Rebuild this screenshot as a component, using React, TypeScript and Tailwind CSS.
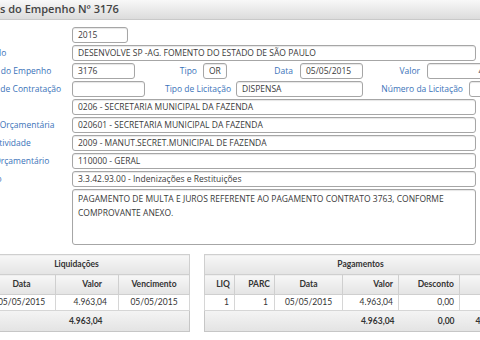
import type { ReactNode } from "react";

type Row = { label: string; lcls: string; value: string };

// full width rows below the "Tipo" block
const fullRows: Row[] = [
  { label: "Órgão", lcls: "-ml-[40px]", value: "0206 - SECRETARIA MUNICIPAL DA FAZENDA" },
  { label: "Unidade Orçamentária", lcls: "-ml-[36px]", value: "020601 - SECRETARIA MUNICIPAL DA FAZENDA" },
  { label: "Projeto/Atividade", lcls: "-ml-[38px]", value: "2009 - MANUT.SECRET.MUNICIPAL DE FAZENDA" },
  { label: "Recurso Orçamentário", lcls: "-ml-[40px]", value: "110000 - GERAL" },
  { label: "Elemento", lcls: "-ml-[36px]", value: "3.3.42.93.00 - Indenizações e Restituições" },
];

function Label({ children, className = "" }: { children: ReactNode; className?: string }) {
  return (
    <div className="w-[72px] shrink-0">
      <span className={`block whitespace-nowrap text-[#3b73b9] ${className}`}>{children}</span>
    </div>
  );
}

function Field({ children, className = "" }: { children?: ReactNode; className?: string }) {
  return (
    <div
      className={`h-[16px] shrink-0 rounded-[3px] border border-[#a6a6a6] bg-white px-[5px] leading-[14px] whitespace-nowrap overflow-hidden shadow-[inset_0_1px_1px_rgba(0,0,0,0.1)] ${className}`}
    >
      {children}
    </div>
  );
}

const th = "border border-[#cfcfcf] font-bold text-[#333] h-[20px] bg-gradient-to-b from-[#f7f7f7] to-[#e4e4e4]";
const td = "border border-[#d6d6d6] h-[16px] bg-white";

export default function App() {
  return (
    <div className="w-[480px] h-[340px] overflow-hidden bg-white font-['Open_Sans',sans-serif] text-[8.5px] text-[#3a3a3a]">
      {/* title bar */}
      <div className="h-[20px] border-b border-[#c9c9c9] bg-gradient-to-b from-[#f8f8f8] to-[#dcdcdc] flex items-center">
        <span className="-ml-[28px] whitespace-nowrap text-[11px] font-semibold text-[#444]">
          Dados do Empenho Nº 3176
        </span>
      </div>

      {/* form */}
      <div className="mt-[7px] flex flex-col gap-[2px]">
        <div className="flex items-center">
          <Label className="-ml-[30px]">Ano</Label>
          <Field className="w-[56px]">2015</Field>
        </div>
        <div className="flex items-center">
          <Label className="-ml-[16px]">Título</Label>
          <Field className="w-[404px]">DESENVOLVE SP -AG. FOMENTO DO ESTADO DE SÃO PAULO</Field>
        </div>
        <div className="flex items-center">
          <Label className="-ml-[11px]">Nº do Empenho</Label>
          <Field className="w-[63px]">3176</Field>
          <div className="w-[68px] shrink-0 pr-[6px] text-right text-[#3b73b9]">Tipo</div>
          <Field className="w-[24px]">OR</Field>
          <div className="w-[73px] shrink-0 pr-[7px] text-right text-[#3b73b9]">Data</div>
          <Field className="w-[63px]">05/05/2015</Field>
          <div className="w-[64px] shrink-0 pr-[7px] text-right text-[#3b73b9]">Valor</div>
          <Field className="w-[91px] text-right">4.963,04</Field>
        </div>
        <div className="flex items-center">
          <Label className="-ml-[19px]">Tipo de Contratação</Label>
          <Field className="w-[73px]" />
          <div className="w-[91px] shrink-0 pr-[5px] text-right text-[#3b73b9]">Tipo de Licitação</div>
          <Field className="w-[127px]">DISPENSA</Field>
          <div className="w-[106px] shrink-0 pr-[6px] text-right text-[#3b73b9] whitespace-nowrap">Número da Licitação</div>
          <Field className="w-[60px]" />
        </div>
        {fullRows.map((r) => (
          <div key={r.label} className="flex items-center">
            <Label className={r.lcls}>{r.label}</Label>
            <Field className="w-[404px]">{r.value}</Field>
          </div>
        ))}
        <div className="flex items-start">
          <Label className="-ml-[45px]">Histórico</Label>
          <div className="h-[56px] w-[404px] shrink-0 rounded-[3px] border border-[#a6a6a6] px-[5px] pt-[2px] leading-[14px] shadow-[inset_0_1px_1px_rgba(0,0,0,0.1)]">
            PAGAMENTO DE MULTA E JUROS REFERENTE AO PAGAMENTO CONTRATO 3763, CONFORME COMPROVANTE ANEXO.
          </div>
        </div>
      </div>

      {/* tables */}
      <div className="mt-[9px] flex items-start font-['Lato',sans-serif] text-[8.5px] text-[#333]">
        <table className="-ml-[37px] w-[226px] shrink-0 table-fixed border-collapse border border-[#c6c6c6]">
          <colgroup>
            <col className="w-[24px]" />
            <col className="w-[68px]" />
            <col className="w-[63px]" />
            <col className="w-[71px]" />
          </colgroup>
          <thead>
            <tr>
              <th colSpan={4} className={`${th} h-[19px] text-center`}>Liquidações</th>
            </tr>
            <tr>
              <th className={`${th} text-right pr-[4px]`}>Nº</th>
              <th className={`${th} text-center`}>Data</th>
              <th className={`${th} text-right pr-[16px]`}>Valor</th>
              <th className={`${th} text-center`}>Vencimento</th>
            </tr>
          </thead>
          <tbody>
            <tr>
              <td className={`${td} text-right pr-[4px]`}>1</td>
              <td className={`${td} text-center`}>05/05/2015</td>
              <td className={`${td} text-right pr-[11px]`}>4.963,04</td>
              <td className={`${td} text-center`}>05/05/2015</td>
            </tr>
            <tr className="h-[21px] bg-gradient-to-b from-[#f4f4f4] to-[#e3e3e3] font-bold">
              <td colSpan={2} />
              <td className="text-right pr-[16px]">4.963,04</td>
              <td />
            </tr>
          </tbody>
        </table>

        <table className="ml-[14px] w-[312px] shrink-0 table-fixed border-collapse border border-[#c6c6c6]">
          <colgroup>
            <col className="w-[30px]" />
            <col className="w-[40px]" />
            <col className="w-[68px]" />
            <col className="w-[56px]" />
            <col className="w-[61px]" />
            <col className="w-[57px]" />
          </colgroup>
          <thead>
            <tr>
              <th colSpan={6} className={`${th} h-[19px] text-center`}>Pagamentos</th>
            </tr>
            <tr>
              <th className={`${th} text-right pr-[4px]`}>LIQ</th>
              <th className={`${th} text-right pr-[4px]`}>PARC</th>
              <th className={`${th} text-center`}>Data</th>
              <th className={`${th} text-right pr-[5px]`}>Valor</th>
              <th className={`${th} text-right pr-[5px]`}>Desconto</th>
              <th className={`${th} text-right pr-[5px]`}>Líquido</th>
            </tr>
          </thead>
          <tbody>
            <tr>
              <td className={`${td} text-right pr-[5px]`}>1</td>
              <td className={`${td} text-right pr-[6px]`}>1</td>
              <td className={`${td} text-center`}>05/05/2015</td>
              <td className={`${td} text-right pr-[5px]`}>4.963,04</td>
              <td className={`${td} text-right pr-[5px]`}>0,00</td>
              <td className={`${td} text-right pr-[1px]`}>4.963,04</td>
            </tr>
            <tr className="h-[21px] bg-gradient-to-b from-[#f4f4f4] to-[#e3e3e3] font-bold">
              <td colSpan={3} />
              <td className="text-right pr-[4px]">4.963,04</td>
              <td className="text-right pr-[5px]">0,00</td>
              <td className="text-right pr-[7px]">4.963,04</td>
            </tr>
          </tbody>
        </table>
      </div>
    </div>
  );
}
